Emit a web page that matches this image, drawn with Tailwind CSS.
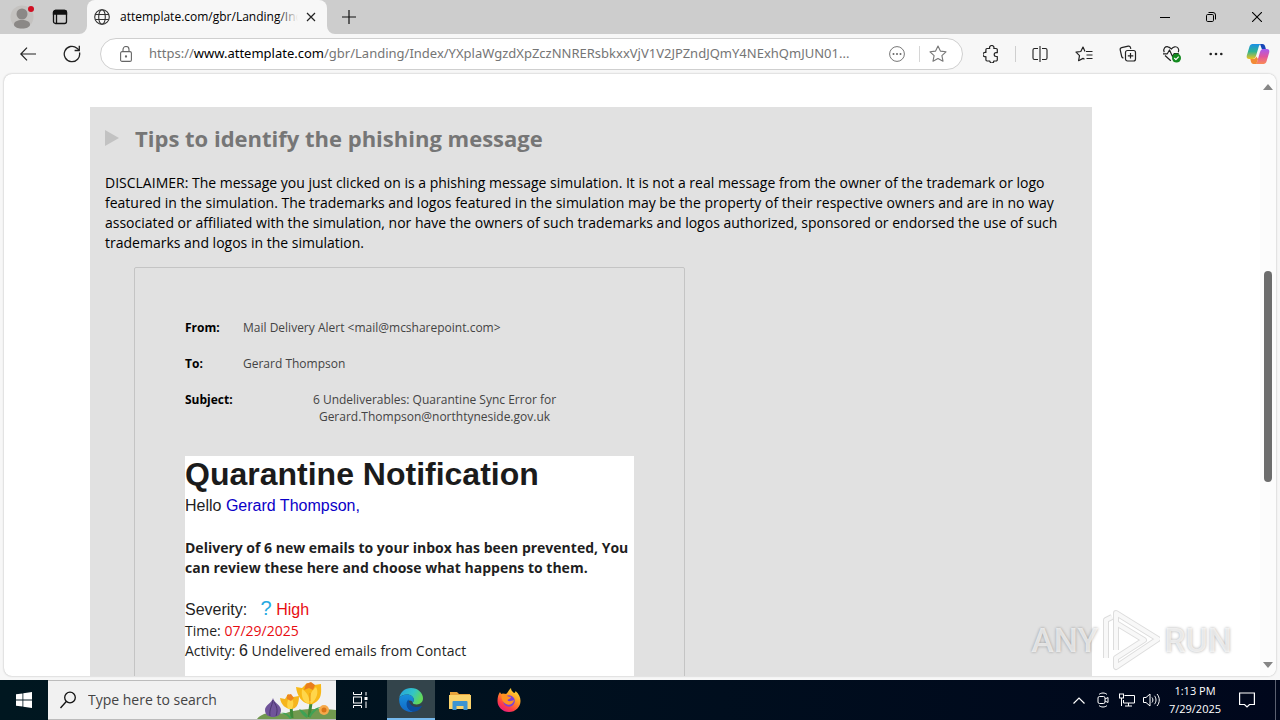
<!DOCTYPE html>
<html lang="en">
  <head>
    <meta charset="utf-8">
    <title>attemplate.com/gbr/Landing/Index</title>
    <script src="https://cdn.jsdelivr.net/npm/@tailwindcss/browser@4"></script>
  </head>
  <body class="flex h-screen flex-col overflow-hidden bg-[#f7f7f7] font-['Open_Sans',sans-serif] text-black">

    <!-- tab strip -->
    <header class="flex h-[34px] shrink-0 bg-[#cdcdcd]">
      <button class="flex w-11 items-center justify-center" aria-label="Profile">
        <svg width="24" height="26" viewBox="0 0 24 26">
          <circle cx="12" cy="13" r="11.500" fill="#c4c2c0"/>
          <circle cx="12" cy="10" r="5.500" fill="#8b8886"/>
          <path d="M4 20.500c0-3 3.500-4.500 8-4.500s8 1.500 8 4.500c0 2.500-3.500 4-8 4s-8-1.500-8-4z" fill="#8b8886"/>
          <circle cx="21" cy="5" r="3" fill="#d00f23"/>
        </svg>
      </button>
      <button class="flex w-8 items-center justify-center" aria-label="Tab actions">
        <svg width="16" height="16" viewBox="0 0 16 16" fill="none" stroke="#111" stroke-width="1.300">
          <rect x="1.500" y="1.500" width="13" height="13" rx="2"/>
          <path d="M1.500 3.500a2 2 0 0 1 2-2h9a2 2 0 0 1 2 2v1.500h-13z" fill="#111"/>
          <path d="M4.500 5v9.500"/>
        </svg>
      </button>
      <div class="relative ml-[11px] flex w-60 items-center rounded-t-lg bg-[#f7f7f7] pl-[7px]">
        <svg class="absolute bottom-0 -left-2" width="8" height="8" viewBox="0 0 8 8"><path d="M8 0v8H0a8 8 0 0 0 8-8z" fill="#f7f7f7"/></svg>
        <svg class="absolute -right-2 bottom-0" width="8" height="8" viewBox="0 0 8 8"><path d="M0 0v8h8a8 8 0 0 1-8-8z" fill="#f7f7f7"/></svg>
        <svg width="16" height="16" viewBox="0 0 16 16" fill="none" stroke="#333" stroke-width="1.100">
          <circle cx="8" cy="8" r="7.300"/>
          <ellipse cx="8" cy="8" rx="3.300" ry="7.300"/>
          <path d="M1.300 5.500h13.400M1.300 10.500h13.400"/>
        </svg>
        <div class="relative ml-[10px] w-[178px] overflow-hidden text-xs whitespace-nowrap">
          attemplate.com/gbr/Landing/Inde
          <div class="absolute inset-y-0 right-0 w-5 bg-linear-to-r from-[#f7f7f7]/0 to-[#f7f7f7]"></div>
        </div>
        <button class="ml-1 flex size-[18px] items-center justify-center" aria-label="Close tab">
          <svg width="10" height="10" viewBox="0 0 10 10" stroke="#222" stroke-width="1.200"><path d="M1 1l8 8M9 1l-8 8"/></svg>
        </button>
      </div>
      <button class="ml-1 flex w-9 items-center justify-center" aria-label="New tab">
        <svg width="14" height="14" viewBox="0 0 14 14" stroke="#111" stroke-width="1.200"><path d="M7 0v14M0 7h14"/></svg>
      </button>
      <div class="ml-auto flex">
        <button class="flex w-[46px] items-center justify-center" aria-label="Minimize">
          <svg width="10" height="10" viewBox="0 0 10 10" stroke="#000"><path d="M0 5.500h10"/></svg>
        </button>
        <button class="flex w-[46px] items-center justify-center" aria-label="Restore">
          <svg width="10" height="10" viewBox="0 0 10 10" fill="none" stroke="#000">
            <rect x=".5" y="2.500" width="7" height="7" rx="1.200"/>
            <path d="M2.500.5H7a2.500 2.500 0 0 1 2.500 2.500v4.500"/>
          </svg>
        </button>
        <button class="flex w-[46px] items-center justify-center" aria-label="Close">
          <svg width="10" height="10" viewBox="0 0 10 10" stroke="#000" stroke-width="1.100"><path d="M0 0l10 10M10 0L0 10"/></svg>
        </button>
      </div>
    </header>

    <!-- toolbar -->
    <nav class="flex h-10 shrink-0 items-center pr-0.5 pl-1.5">
      <button class="flex h-8 w-11 items-center justify-center" aria-label="Back">
        <svg width="16" height="14" viewBox="0 0 16 14" fill="none" stroke="#222" stroke-width="1.200"><path d="M16 7H.8M7 .7L.8 7 7 13.300"/></svg>
      </button>
      <button class="flex h-8 w-11 items-center justify-center" aria-label="Refresh">
        <svg width="18" height="18" viewBox="0 0 18 18" fill="none" stroke="#222" stroke-width="1.300">
          <path d="M16.500 7.500A7.700 7.700 0 1 1 14 3.200l2 1.800"/><path d="M16.300.8v4.700h-4.700"/>
        </svg>
      </button>
      <div class="ml-1.5 flex h-8 flex-1 items-center rounded-full border border-[#cfcfcf] bg-white pr-2.5 pl-[19px]">
        <svg width="12" height="16" viewBox="0 0 12 16" fill="none" stroke="#666" stroke-width="1.100">
          <rect x=".6" y="5.600" width="10.800" height="9.800" rx="1.500"/>
          <path d="M3 5.500V3.500a3 3 0 0 1 6 0v2"/><circle cx="6" cy="10.500" r=".6" fill="#666"/>
        </svg>
        <div class="ml-[17px] min-w-0 flex-1 overflow-hidden font-['Noto_Sans',sans-serif] text-[13px] whitespace-nowrap text-[#757575]">https://<span class="text-black">www.attemplate.com</span>/gbr/Landing/Index/YXplaWgzdXpZczNNRERsbkxxVjV1V2JPZndJQmY4NExhQmJUN01...</div>
        <button class="flex w-9 justify-center" aria-label="Page information">
          <svg width="16" height="16" viewBox="0 0 16 16"><circle cx="8" cy="8" r="7.400" fill="none" stroke="#777"/><g fill="#666"><circle cx="4.500" cy="8" r="1"/><circle cx="8" cy="8" r="1"/><circle cx="11.500" cy="8" r="1"/></g></svg>
        </button>
        <div class="mx-1 h-4 w-px bg-[#d6d6d6]"></div>
        <button class="flex w-7 justify-center" aria-label="Add to favorites">
          <svg width="18" height="18" viewBox="0 0 18 18" fill="none" stroke="#777" stroke-width="1.100" stroke-linejoin="round"><path d="M9 1l2.400 5.100 5.600.7-4.100 3.800 1.100 5.600L9 13.500l-5 2.700 1.100-5.600L1 6.800l5.600-.7z"/></svg>
        </button>
      </div>
      <button class="ml-1.5 flex h-8 w-11 items-center justify-center" aria-label="Extensions">
        <svg width="16" height="18" viewBox="0 0 16 18" fill="none" stroke="#222" stroke-width="1.200" stroke-linejoin="round"><path d="M4 3.500h2.700a2.200 2.200 0 1 1 4.100 0h2.300a1.200 1.200 0 0 1 1.200 1.200v3h-1.200a1.900 1.900 0 0 0 0 3.800h1.200v3.300a1.200 1.200 0 0 1-1.200 1.200h-2.300a2 2 0 0 1-4 0H4.100a1.200 1.200 0 0 1-1.200-1.200v-3.200a2.200 2.200 0 1 1 0-4.100v-2.800A1.200 1.200 0 0 1 4 3.500z"/></svg>
      </button>
      <div class="mx-0.5 h-4 w-px bg-[#cfcfcf]"></div>
      <button class="flex h-8 w-11 items-center justify-center" aria-label="Split screen">
        <svg width="16" height="16" viewBox="0 0 16 16" fill="none" stroke="#222" stroke-width="1.100"><path d="M8 0v16M6 2.500H2.500a1.500 1.500 0 0 0-1.500 1.500v8a1.500 1.500 0 0 0 1.500 1.500H6M10 2.500h3.500A1.500 1.500 0 0 1 15 4v8a1.500 1.500 0 0 1-1.500 1.500H10"/></svg>
      </button>
      <button class="flex h-8 w-11 items-center justify-center" aria-label="Favorites">
        <svg width="18" height="18" viewBox="0 0 18 18" fill="none" stroke="#222" stroke-width="1.200" stroke-linejoin="round"><path d="M11 6.500H17.500M11.500 10h6M11.500 13.500h6M10 6.500L8 2 5.800 6.500 1 7.200l3.500 3.500-.9 5L8 13.400l1.500.8"/></svg>
      </button>
      <button class="flex h-8 w-11 items-center justify-center" aria-label="Collections">
        <svg width="18" height="18" viewBox="0 0 18 18" fill="none" stroke="#222" stroke-width="1.200"><rect x="6.500" y="5.500" width="10" height="10.500" rx="2"/><path d="M11.500 8v5.500M8.800 10.800h5.500M4.500 13a2 2 0 0 1-1.800-1.500L1.200 5a2 2 0 0 1 1.500-2.300l6.500-1.500a2 2 0 0 1 2.300 1.500l.3 1.200"/></svg>
      </button>
      <button class="flex h-8 w-11 items-center justify-center" aria-label="Browser essentials">
        <svg width="20" height="18" viewBox="0 0 20 18" fill="none" stroke="#222" stroke-width="1.200" stroke-linejoin="round"><path d="M2.200 7.200C.6 3.500 3.500 1.200 6 1.800c1.500.3 2.500 1.200 3.300 2.200C10.200 3 11.200 2 12.700 1.800c3-.4 5 2.500 3.600 5.400M3 10.500l5.800 5.300M1 8.800h4.300L7.500 5l3 6.500 1.700-3h4.500"/><circle cx="14.500" cy="13" r="4.500" fill="#138a1f" stroke="none"/><path d="M12.300 13l1.600 1.600 2.800-3" stroke="#fff"/></svg>
      </button>
      <button class="flex h-8 w-11 items-center justify-center" aria-label="Settings and more">
        <svg width="14" height="4" viewBox="0 0 14 4" fill="#222"><circle cx="1.700" cy="2" r="1.300"/><circle cx="7" cy="2" r="1.300"/><circle cx="12.300" cy="2" r="1.300"/></svg>
      </button>
      <button class="flex h-8 w-10 items-center justify-center" aria-label="Copilot">
        <svg width="24" height="22" viewBox="0 0 24 22">
          <defs>
            <linearGradient id="cpa" x1="0" y1="0" x2="0" y2="1"><stop offset="0" stop-color="#1a8fe8"/><stop offset=".5" stop-color="#2fb493"/><stop offset="1" stop-color="#f2c21c"/></linearGradient>
            <linearGradient id="cpb" x1="0" y1="0" x2="0" y2="1"><stop offset="0" stop-color="#a65bf0"/><stop offset=".5" stop-color="#e0559f"/><stop offset="1" stop-color="#fb8a55"/></linearGradient>
          </defs>
          <path d="M14 1h2.500c1.500 0 2.300 1 2.700 2.500l.8 3h-4z" fill="#1647b8"/>
          <path d="M6.500 1H15c-1.500.5-2 1.700-2.500 3.500L10 13c-.6 2-1.700 3-3.500 3H3.300C1 16 .3 14.500.8 12.500L3.500 3.500C4 2 5 1 6.500 1z" fill="url(#cpa)"/>
          <path d="M17.500 6h3.300c2.200 0 2.900 1.500 2.400 3.500l-2.700 9c-.5 1.500-1.500 2.500-3 2.500H9c1.500-.5 2-1.700 2.500-3.500L14 9c.6-2 1.700-3 3.500-3z" fill="url(#cpb)"/>
          <path d="M10 21H7.500C6 21 5.300 20 4.900 18.500L4.300 16h3c1.500 0 2.500-1 3-2.500l1.700 2.500-.8 2.700z" fill="#f28a35"/>
        </svg>
      </button>
    </nav>

    <!-- page viewport -->
    <div class="mx-1 mb-1 flex min-h-0 flex-1 overflow-hidden rounded-lg bg-white shadow-[0_0_2px_#aaa]">
      <main class="min-w-0 flex-1 overflow-hidden pt-[33px]">
        <section class="mr-[168px] ml-[86px] bg-[#e1e1e1] px-[15px] pt-[15px]">
          <div class="flex items-center">
            <svg width="14" height="16" viewBox="0 0 14 16"><path d="M0 0l14 8-14 8z" fill="#c2c2c2"/></svg>
            <h2 class="ml-4 text-[22px] leading-8 font-bold text-[#767676]">Tips to identify the phishing message</h2>
          </div>
          <p class="mt-[19px] text-sm leading-5 whitespace-nowrap">
            DISCLAIMER: The message you just clicked on is a phishing message simulation. It is not a real message from the owner of the trademark or logo<br>
            featured in the simulation. The trademarks and logos featured in the simulation may be the property of their respective owners and are in no way<br>
            associated or affiliated with the simulation, nor have the owners of such trademarks and logos authorized, sponsored or endorsed the use of such<br>
            trademarks and logos in the simulation.
          </p>

          <article class="mt-[14px] ml-[29px] w-[551px] rounded-t-xs border border-[#c4c4c4] px-[50px] pt-[51px] pb-12">
            <table class="w-full text-xs leading-[17px] text-[#444]">
              <tr class="h-9 align-top">
                <th class="w-[58px] text-left font-bold text-black">From:</th>
                <td>Mail Delivery Alert &lt;mail@mcsharepoint.com&gt;</td>
              </tr>
              <tr class="h-9 align-top">
                <th class="text-left font-bold text-black">To:</th>
                <td>Gerard Thompson</td>
              </tr>
              <tr class="align-top">
                <th class="text-left font-bold text-black">Subject:</th>
                <td class="pr-2 text-center">6 Undeliverables: Quarantine Sync Error for<br>Gerard.Thompson@northtyneside.gov.uk</td>
              </tr>
            </table>

            <div class="mt-[31px] bg-white pb-12 text-sm leading-5 text-[#1f1f1f]">
              <h1 class="font-['Liberation_Sans',sans-serif] text-[32px] leading-9 font-bold text-[#1b1b1b]">Quarantine Notification</h1>
              <p class="mt-1 font-['Liberation_Sans',sans-serif] text-base leading-5">Hello <span class="text-[#0b00c8]">Gerard Thompson,</span></p>
              <p class="mt-[22px] font-bold whitespace-nowrap">Delivery of 6 new emails to your inbox has been prevented, You<br>can review these here and choose what happens to them.</p>
              <p class="mt-5 font-['Liberation_Sans',sans-serif] text-base leading-[23px]">Severity: &nbsp; <span class="text-xl leading-5 text-[#27a9e1]">?</span> <span class="text-[#e80c12]">High</span></p>
              <p>Time: <span class="text-[#e80c12]">07/29/2025</span></p>
              <p>Activity: <span class="font-['Liberation_Sans',sans-serif] text-base leading-5">6</span> Undelivered emails from Contact</p>
            </div>
          </article>
        </section>
      </main>

      <!-- scroll bar -->
      <div class="flex w-4 flex-col items-center bg-[#fcfcfc] py-2">
        <svg class="mt-0.5" width="10" height="6" viewBox="0 0 10 6"><path d="M5 0l5 6H0z" fill="#858585"/></svg>
        <div class="grow-[180]"></div>
        <div class="w-2 grow-[210] rounded-full bg-[#6d6d6d]"></div>
        <div class="grow-[179]"></div>
        <svg width="10" height="6" viewBox="0 0 10 6"><path d="M5 6L0 0h10z" fill="#858585"/></svg>
      </div>
    </div>

    <!-- watermark, lies over the page -->
    <div class="absolute right-12 bottom-12 flex items-center font-['Roboto',sans-serif] text-[34px] leading-none font-medium text-white/70 [text-shadow:0_0_3px_#0005]">
      <span>ANY</span>
      <svg class="ml-1 mr-1" width="58" height="64" viewBox="0 0 58 64" fill="none" stroke-linejoin="round">
        <path d="M4 50V12l6-3M14 42V5l42 26-42 28v-9l28-18-28-17" stroke="#0002" stroke-width="6"/>
        <path d="M4 50V12l6-3M14 42V5l42 26-42 28v-9l28-18-28-17" stroke="#fff" stroke-opacity=".8" stroke-width="4"/>
      </svg>
      <span>RUN</span>
    </div>

    <!-- taskbar -->
    <footer class="flex h-10 shrink-0 bg-linear-to-r from-[#001720] to-[#00071c] text-white">
      <button class="flex w-12 items-center justify-center" aria-label="Start">
        <svg width="16" height="16" viewBox="0 0 16 16" fill="#fff"><path d="M0 2.300l6.500-.9v6.200H0zM7.300 1.300L16 0v7.600H7.300zM0 8.400h6.500v6.200L0 13.700zM7.300 8.400H16V16l-8.700-1.300z"/></svg>
      </button>
      <label class="flex w-72 items-center border-y border-[#bcbcbc] bg-[#f1f1f1] pl-3">
        <svg width="16" height="18" viewBox="0 0 16 18" fill="none" stroke="#111" stroke-width="1.300"><circle cx="10" cy="6.500" r="5.300"/><path d="M6.300 10.500L.5 17"/></svg>
        <input class="ml-3 w-[150px] bg-transparent text-sm text-[#333] outline-none placeholder:text-[#444]" placeholder="Type here to search" aria-label="Search">
        <svg class="ml-auto" width="80" height="38" viewBox="0 0 80 38">
          <path d="M1 38c6-7 16-7 27-5 10-5 30-6 52-4v9z" fill="#71994f"/>
          <path d="M36 37l-1-12M53 36l2-14" stroke="#3f8a3a" stroke-width="3"/>
          <path d="M36 37c-4-5-8-6-11-5 4 1 7 3 9 6zM53 35c2-5 7-9 12-9-5 3-8 6-11 11zM52 35c-3-4-5-6-9-7 2 4 4 7 8 9z" fill="#3fa255"/>
          <path d="M17 17c1 5 8 7 8 12 0 5-4 7-8 7s-8-2-8-7 7-7 8-12z" fill="#70549a"/>
          <path d="M17 19c-1 6-4 10-3 16M18 21c3 5 4 8 2 14" stroke="#4a366f" fill="none"/>
          <path d="M24 17l5 1 3-5 5 3 6-1c0 9-3 13-8 13s-10-4-11-11z" fill="#f5b51d"/>
          <path d="M32 28c-2-6 0-10 2-13 4 5 4 8 2 13z" fill="#ffd447"/>
          <path d="M31 14l4-1 3 4-3 3-4-2z" fill="#ed851f"/>
          <path d="M40 6l6 1 5-5 7 2 7-1c0 5 1 11-2 15-3 4-7 6-10 5-7-1-12-8-13-17z" fill="#f8b817"/>
          <path d="M46 8c6 4 8 9 7 15-6-2-8-7-7-15zM60 6c3 5 1 12-5 17-2-7-1-12 5-17z" fill="#ffd64b"/>
          <path d="M50 3l5-2 4 3-2 5-4-2-5 2z" fill="#e97e1d"/>
          <path d="M54 12v8" stroke="#e99517"/>
          <circle cx="68" cy="29" r="5" fill="#f6a94a"/><circle cx="68" cy="29" r="2.500" fill="#d97517"/>
        </svg>
      </label>
      <button class="flex w-12 items-center justify-center" aria-label="Task view">
        <svg width="16" height="16" viewBox="0 0 16 16" fill="none" stroke="#fff"><path d="M1.500 0v2.500h8V0M1.500 16v-2.500h8V16M14 0v3.500M14 9.500V16"/><rect x="1.500" y="5" width="8" height="6"/><path d="M12.500 6.500h3" stroke-width="3"/></svg>
      </button>
      <button class="ml-[3px] flex w-12 items-center justify-center border-b-2 border-[#76b9ed] bg-[#33444b] pt-0.5" aria-label="Microsoft Edge">
        <svg width="24" height="24" viewBox="0 0 24 24">
          <defs>
            <linearGradient id="ea" x1="0" y1="0" x2="1" y2=".4"><stop offset="0" stop-color="#249fe0"/><stop offset=".6" stop-color="#32c5c7"/><stop offset="1" stop-color="#61d85a"/></linearGradient>
            <linearGradient id="eb" x1="0" y1="0" x2="0" y2="1"><stop offset="0" stop-color="#1890dc"/><stop offset="1" stop-color="#1268c6"/></linearGradient>
          </defs>
          <path d="M.3 10C1.200 4 6 0 12 0c7 0 12 5 12 10.300 0 4-3 6.200-6.200 6.200-2.600 0-4-.8-4-1.700 0-.6 1-1.200 1-3 0-2.800-3-5.300-6.500-5.300C4.300 6.500 1.300 8 .3 10z" fill="url(#ea)"/>
          <path d="M.3 10c1.200-2.200 4.200-3.500 8-3.500 3.500 0 6.500 2.500 6.500 5.300 0 1.800-1 2.400-1 3-1-3.500-5.800-3-5.800 1.200C8 20.500 12 24 16 23.300c-1.200.5-2.500.7-4 .7C5 24-.8 18.500.3 10z" fill="url(#eb)"/>
          <path d="M9.500 11.500C6 14 7 22 14 23.700c4 .3 7-2.200 8.700-5.200.3-.6-.2-.8-.7-.5-5 2.700-11.500.4-12.500-6.500z" fill="#0c4c9c"/>
        </svg>
      </button>
      <button class="flex w-[49px] items-center justify-center" aria-label="File Explorer">
        <svg width="22" height="19" viewBox="0 0 22 19"><path d="M1 1h7l2 2h11v4H1z" fill="#e8a33a"/><path d="M0 4h22v14H0z" fill="#fbd36b"/><path d="M3.500 11a1 1 0 0 1 1-1h13a1 1 0 0 1 1 1v8h-4v-4h-7v4h-4z" fill="#3d94d1"/></svg>
      </button>
      <button class="flex w-[49px] items-center justify-center" aria-label="Firefox">
        <svg width="24" height="24" viewBox="0 0 24 24">
          <defs><linearGradient id="ff" x1=".8" y1="0" x2=".2" y2="1"><stop offset="0" stop-color="#ffe33d"/><stop offset=".4" stop-color="#ff9a22"/><stop offset=".75" stop-color="#ff3b47"/><stop offset="1" stop-color="#e2168c"/></linearGradient></defs>
          <path d="M3 4c.5 1 .7 1.500 1.500 2C6 5.500 8 5.500 9 6c1.500-.5 2-3 5-6 0 2 1 3.500 3 5 1.200-.2 1.500-1 1.500-2C22 6 23.500 9 23.500 13c0 6-5 11-11.500 11S.5 19 .5 13C.5 9 1.500 6 3 4z" fill="url(#ff)"/>
          <circle cx="12" cy="13" r="5.800" fill="#7a41d8"/>
          <path d="M4.500 6c3-.5 4.500 0 5.500 2 1 .8 3 .5 4 1-.5 2-3 2-3.500 3 .5 2 4 1 6.500 0-.5 4-5 6-8 4-4-2-5-6-4.500-10z" fill="#ff9220"/>
        </svg>
      </button>

      <div class="ml-auto flex items-center">
        <button class="flex w-6 justify-center" aria-label="Show hidden icons">
          <svg width="12" height="7" viewBox="0 0 12 7" fill="none" stroke="#fff" stroke-width="1.200"><path d="M.5 6.500L6 1l5.500 5.500"/></svg>
        </button>
        <button class="flex w-6 justify-center" aria-label="Meet now">
          <svg width="12" height="16" viewBox="0 0 12 16" fill="none" stroke="#fff"><rect x="1" y="4.500" width="7" height="7" rx="1.500"/><path d="M8 7l3-1.500v5L8 9M2 2.500c2-2 6-2 8 0M2 13.500c2 2 6 2 8 0"/></svg>
        </button>
        <button class="flex w-6 justify-center" aria-label="Network">
          <svg width="16" height="14" viewBox="0 0 16 14" fill="none" stroke="#fff"><path d="M5.500 2.500h10v7.500H4.500V7M9.500 10v3M6 13h7"/><rect x=".5" y="1" width="4" height="4"/><path d="M2.500 5v8"/></svg>
        </button>
        <button class="flex w-6 justify-center" aria-label="Volume">
          <svg width="17" height="14" viewBox="0 0 17 14" fill="none" stroke="#fff"><path d="M.5 4.500h2.500l4-3.500v12l-4-3.500H.5zM9 4.500c1.200 1.500 1.200 3.500 0 5M11.500 2.800c2 2.500 2 6 0 8.400M14 1c3 3.500 3 8.500 0 12"/></svg>
        </button>
        <div class="w-16 text-center text-[11px] leading-[18px]"><div>1:13 PM</div><div>7/29/2025</div></div>
        <button class="flex w-10 justify-center" aria-label="Notifications">
          <svg width="16" height="16" viewBox="0 0 16 16" fill="none" stroke="#fff" stroke-width="1.200"><path d="M.6 1h14.800v11.500H10.500L8 15l-2.500-2.500H.6z"/></svg>
        </button>
        <div class="mr-1 ml-2 h-10 w-px bg-[#5b6070]"></div>
      </div>
    </footer>
  </body>
</html>
